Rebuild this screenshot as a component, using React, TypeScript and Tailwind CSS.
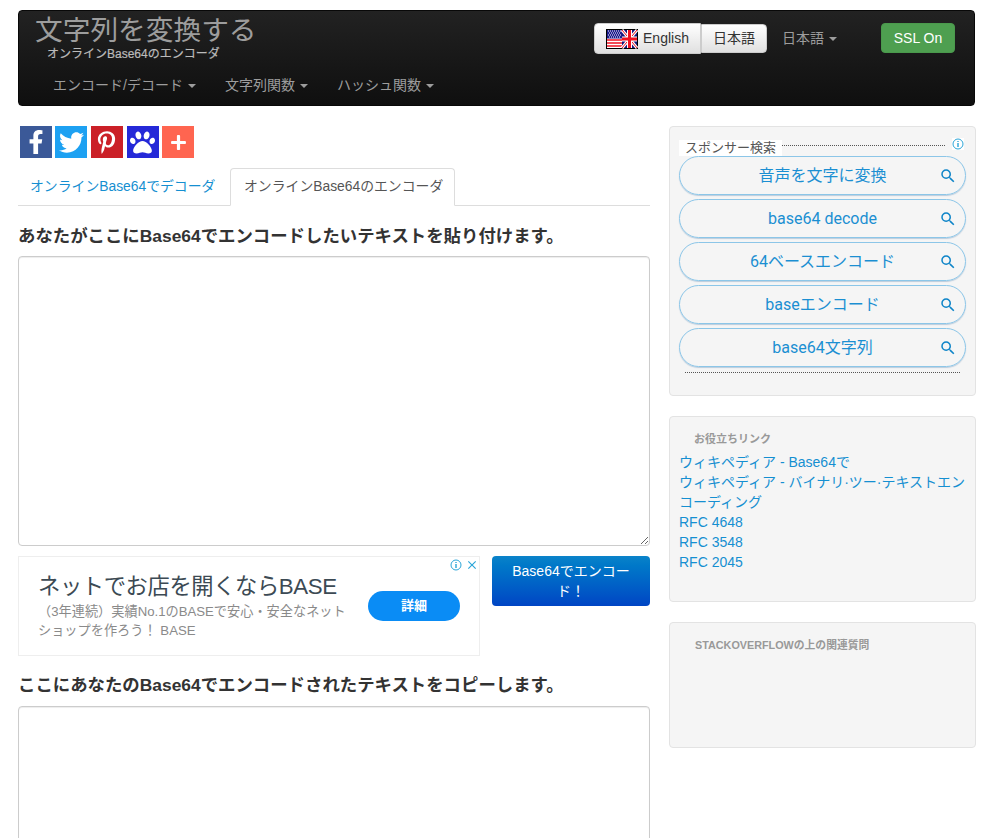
import React from 'react';
import { FaFacebookF, FaTwitter, FaPinterestP, FaPaw, FaPlus } from 'react-icons/fa';
import { MdSearch, MdClose } from 'react-icons/md';

const FONT = "font-['Liberation_Sans','Noto_Sans_CJK_JP',sans-serif]";

const SHARE = [
  { Icon: FaFacebookF, color: 'bg-[#3b5998]', size: 24 },
  { Icon: FaTwitter, color: 'bg-[#1da1f2]', size: 25 },
  { Icon: FaPinterestP, color: 'bg-[#cb2027]', size: 23 },
  { Icon: FaPaw, color: 'bg-[#2529d8]', size: 25 },
  { Icon: FaPlus, color: 'bg-[#ff6550]', size: 17 },
];

const SEARCHES = ['音声を文字に変換', 'base64 decode', '64ベースエンコード', 'baseエンコード', 'base64文字列'];

const LINKS = [
  'ウィキペディア - Base64で',
  'ウィキペディア - バイナリ·ツー·テキストエンコーディング',
  'RFC 4648',
  'RFC 3548',
  'RFC 2045',
];

const Caret = () => (
  <span className="ml-[5px] inline-block align-middle border-x-4 border-t-4 border-x-transparent border-t-[#9d9d9d]" />
);

const InfoIcon = () => (
  <svg width="12" height="12" viewBox="0 0 12 12" fill="none" stroke="#2ba5d8">
    <circle cx="6" cy="6" r="5" />
    <path d="M6 5v4M6 3v1" strokeWidth="1.4" />
  </svg>
);

const Flag = () => (
  <svg width="32" height="20" viewBox="0 0 32 20" className="mr-[5px]">
    <rect width="32" height="20" fill="#000" />
    <rect x="1" y="1" width="15" height="18" fill="#fff" />
    <path d="M1 11h15M1 14h15M1 17h15" stroke="#f01020" strokeWidth="1.6" />
    <rect x="1" y="1" width="15" height="8.5" fill="#1c1c8c" />
    <path d="M2 2h13M3 4h11M2 6h13M3 8h11" stroke="#fff" strokeWidth="1" strokeDasharray="1 1" />
    <rect x="16" y="1" width="15" height="18" fill="#14147a" />
    <path d="M16 1l15 18M31 1L16 19" stroke="#fff" strokeWidth="3" />
    <path d="M16 1l15 18M31 1L16 19" stroke="#f01020" strokeWidth="1" />
    <path d="M23.5 1v18M16 10h15" stroke="#fff" strokeWidth="5" />
    <path d="M23.5 1v18M16 10h15" stroke="#f01020" strokeWidth="3" />
  </svg>
);

const Navbar = () => (
  <nav className="h-[96px] rounded bg-gradient-to-b from-[#222222] to-[#0f0f0f] border border-[#080808] flex justify-between">
    <div className="pl-[16px]">
      <div className="text-[27.7px] leading-[38px] text-[#9d9d9d] mt-[1px]">文字列を変換する</div>
      <div className="text-[12px] leading-[14px] text-[#bbbbbb] ml-[12px] -mt-[3px] [-webkit-text-stroke:0.2px_#bbbbbb]">オンラインBase64のエンコーダ</div>
      <ul className="flex mt-[14px] text-[14px] leading-[20px] text-[#9d9d9d]">
        <li className="ml-[18px] mr-[29px]">エンコード/デコード<Caret /></li>
        <li className="mr-[29px]">文字列関数<Caret /></li>
        <li>ハッシュ関数<Caret /></li>
      </ul>
    </div>
    <div className="flex items-start pt-[12px] pr-[19px]">
      <div className="flex items-center text-[14px]">
        <button className="h-[31px] w-[107px] flex items-center justify-center rounded-l bg-gradient-to-b from-white to-[#e0e0e0] border border-[#cccccc] text-[#333333]">
          <Flag />
          English
        </button>
        <button className="h-[29px] w-[66px] rounded-r bg-gradient-to-b from-white to-[#e0e0e0] border border-[#cccccc] text-[#333333]">日本語</button>
      </div>
      <div className="ml-[15px] mt-[5px] text-[14px] leading-[20px] text-[#9d9d9d]">日本語<Caret /></div>
      <button className="ml-[44px] h-[30px] w-[74px] rounded bg-[#4e9f50] border border-[#4a994c] text-[14px] text-white">SSL On</button>
    </div>
  </nav>
);

const Share = () => (
  <div className="flex gap-[3.7px] pl-[1.5px]">
    {SHARE.map(({ Icon, color, size }, i) => (
      <div key={i} className={`w-[32px] h-[32px] flex items-center justify-center text-white ${color}`}>
        <Icon size={size} />
      </div>
    ))}
  </div>
);

const Tabs = () => (
  <div className="mt-[10px] h-[38px] flex border-b border-[#dddddd] text-[13.85px]">
    <div className="w-[212px] pl-[12px] pt-[8px] text-[#158fd1]">オンラインBase64でデコーダ</div>
    <div className="h-[38px] w-[225px] rounded-t border border-[#dddddd] border-b-white bg-white pl-[13px] pt-[7px] text-[#555555]">
      オンラインBase64のエンコーダ
    </div>
  </div>
);

const Ad = () => (
  <div className="relative w-[462px] h-[100px] border border-[#eeeeee] flex">
    <div className="absolute right-0 top-[1px] flex items-center gap-[3px] text-[#2ba5d8]">
      <InfoIcon />
      <MdClose size={14} />
    </div>
    <div className="pl-[19px] pt-[16px] w-[340px]">
      <div className="text-[22.3px] leading-[28px] tracking-[-0.4px] whitespace-nowrap text-[#3c4a54]">ネットでお店を開くならBASE</div>
      <div className="text-[13.2px] leading-[19px] text-[#8a8a8a] mt-[1px] w-[316px]">（3年連続）実績No.1のBASEで安心・安全なネットショップを作ろう！ BASE</div>
    </div>
    <button className="absolute left-[349px] top-[34px] w-[92px] h-[30px] rounded-full bg-[#0a8cf5] text-white text-[13px] font-bold">詳細</button>
  </div>
);

const Sponsor = () => (
  <section className="h-[270px] rounded bg-[#f5f5f5] border border-[#e3e3e3] px-[9px] pt-[13px]">
    <div className="h-[16px] flex items-start text-[13px] leading-[16px] text-[#555555]">
      <span className="bg-white pl-[6px] pr-[6px]">スポンサー検索</span>
      <span className="mt-[5px] w-[163px] border-t border-dotted border-[#555555]" />
      <span className="ml-[7px] -mt-[2px] bg-white"><InfoIcon /></span>
    </div>
    <div className="flex flex-col gap-[4px]">
      {SEARCHES.map((s) => (
        <div key={s} className="relative h-[39px] rounded-full border border-[#8cc6e8] shadow-[0_1px_1px_#bcd] flex items-center justify-center text-[16px] text-[#1b8fd2] font-['Roboto','Noto_Sans_CJK_JP',sans-serif]">
          {s}
          <MdSearch size={18} className="absolute right-[8px] top-[10px] text-[#0d84c8]" />
        </div>
      ))}
    </div>
    <div className="mx-[6px] mt-[5px] border-t border-dotted border-[#555555]" />
  </section>
);

const Useful = () => (
  <section className="mt-[20px] h-[186px] rounded bg-[#f5f5f5] border border-[#e3e3e3] px-[9px] pt-[14px]">
    <div className="pl-[15px] text-[11px] leading-[16px] font-bold text-[#999999]">お役立ちリンク</div>
    <div className="mt-[5px] text-[14px] leading-[20px] text-[#158fd1]">
      {LINKS.map((l) => (
        <div key={l}>{l}</div>
      ))}
    </div>
  </section>
);

const Related = () => (
  <section className="mt-[20px] h-[126px] rounded bg-[#f5f5f5] border border-[#e3e3e3] pl-[25px] pt-[14px]">
    <div className="text-[10.8px] leading-[16px] font-bold text-[#999999]">STACKOVERFLOWの上の関連質問</div>
  </section>
);

export default function App() {
  return (
    <div className={`h-[838px] overflow-hidden bg-white px-[18px] pt-[10px] text-[#333333] ${FONT}`}>
      <Navbar />
      <div className="mt-[20px] flex gap-[19px]">
        <main className="w-[632px] shrink-0">
          <Share />
          <Tabs />
          <h2 className="mt-[19px] text-[17.4px] leading-[22px] font-bold text-[#333333]">あなたがここにBase64でエンコードしたいテキストを貼り付けます。</h2>
          <textarea className="mt-[9px] block w-full h-[290px] rounded border border-[#cccccc] shadow-[inset_0_1px_1px_rgba(0,0,0,0.075)]" />
          <div className="mt-[10px] flex justify-between">
            <Ad />
            <button className="w-[158px] h-[50px] rounded bg-gradient-to-b from-[#0b83c9] to-[#0044c4] px-[12px] text-[14px] leading-[20px] text-white">Base64でエンコード！</button>
          </div>
          <h2 className="mt-[18px] text-[17.4px] leading-[22px] font-bold text-[#333333]">ここにあなたのBase64でエンコードされたテキストをコピーします。</h2>
          <textarea className="mt-[10px] block w-full h-[290px] rounded border border-[#cccccc] shadow-[inset_0_1px_1px_rgba(0,0,0,0.075)]" />
        </main>
        <aside className="w-[307px] shrink-0">
          <Sponsor />
          <Useful />
          <Related />
        </aside>
      </div>
    </div>
  );
}
